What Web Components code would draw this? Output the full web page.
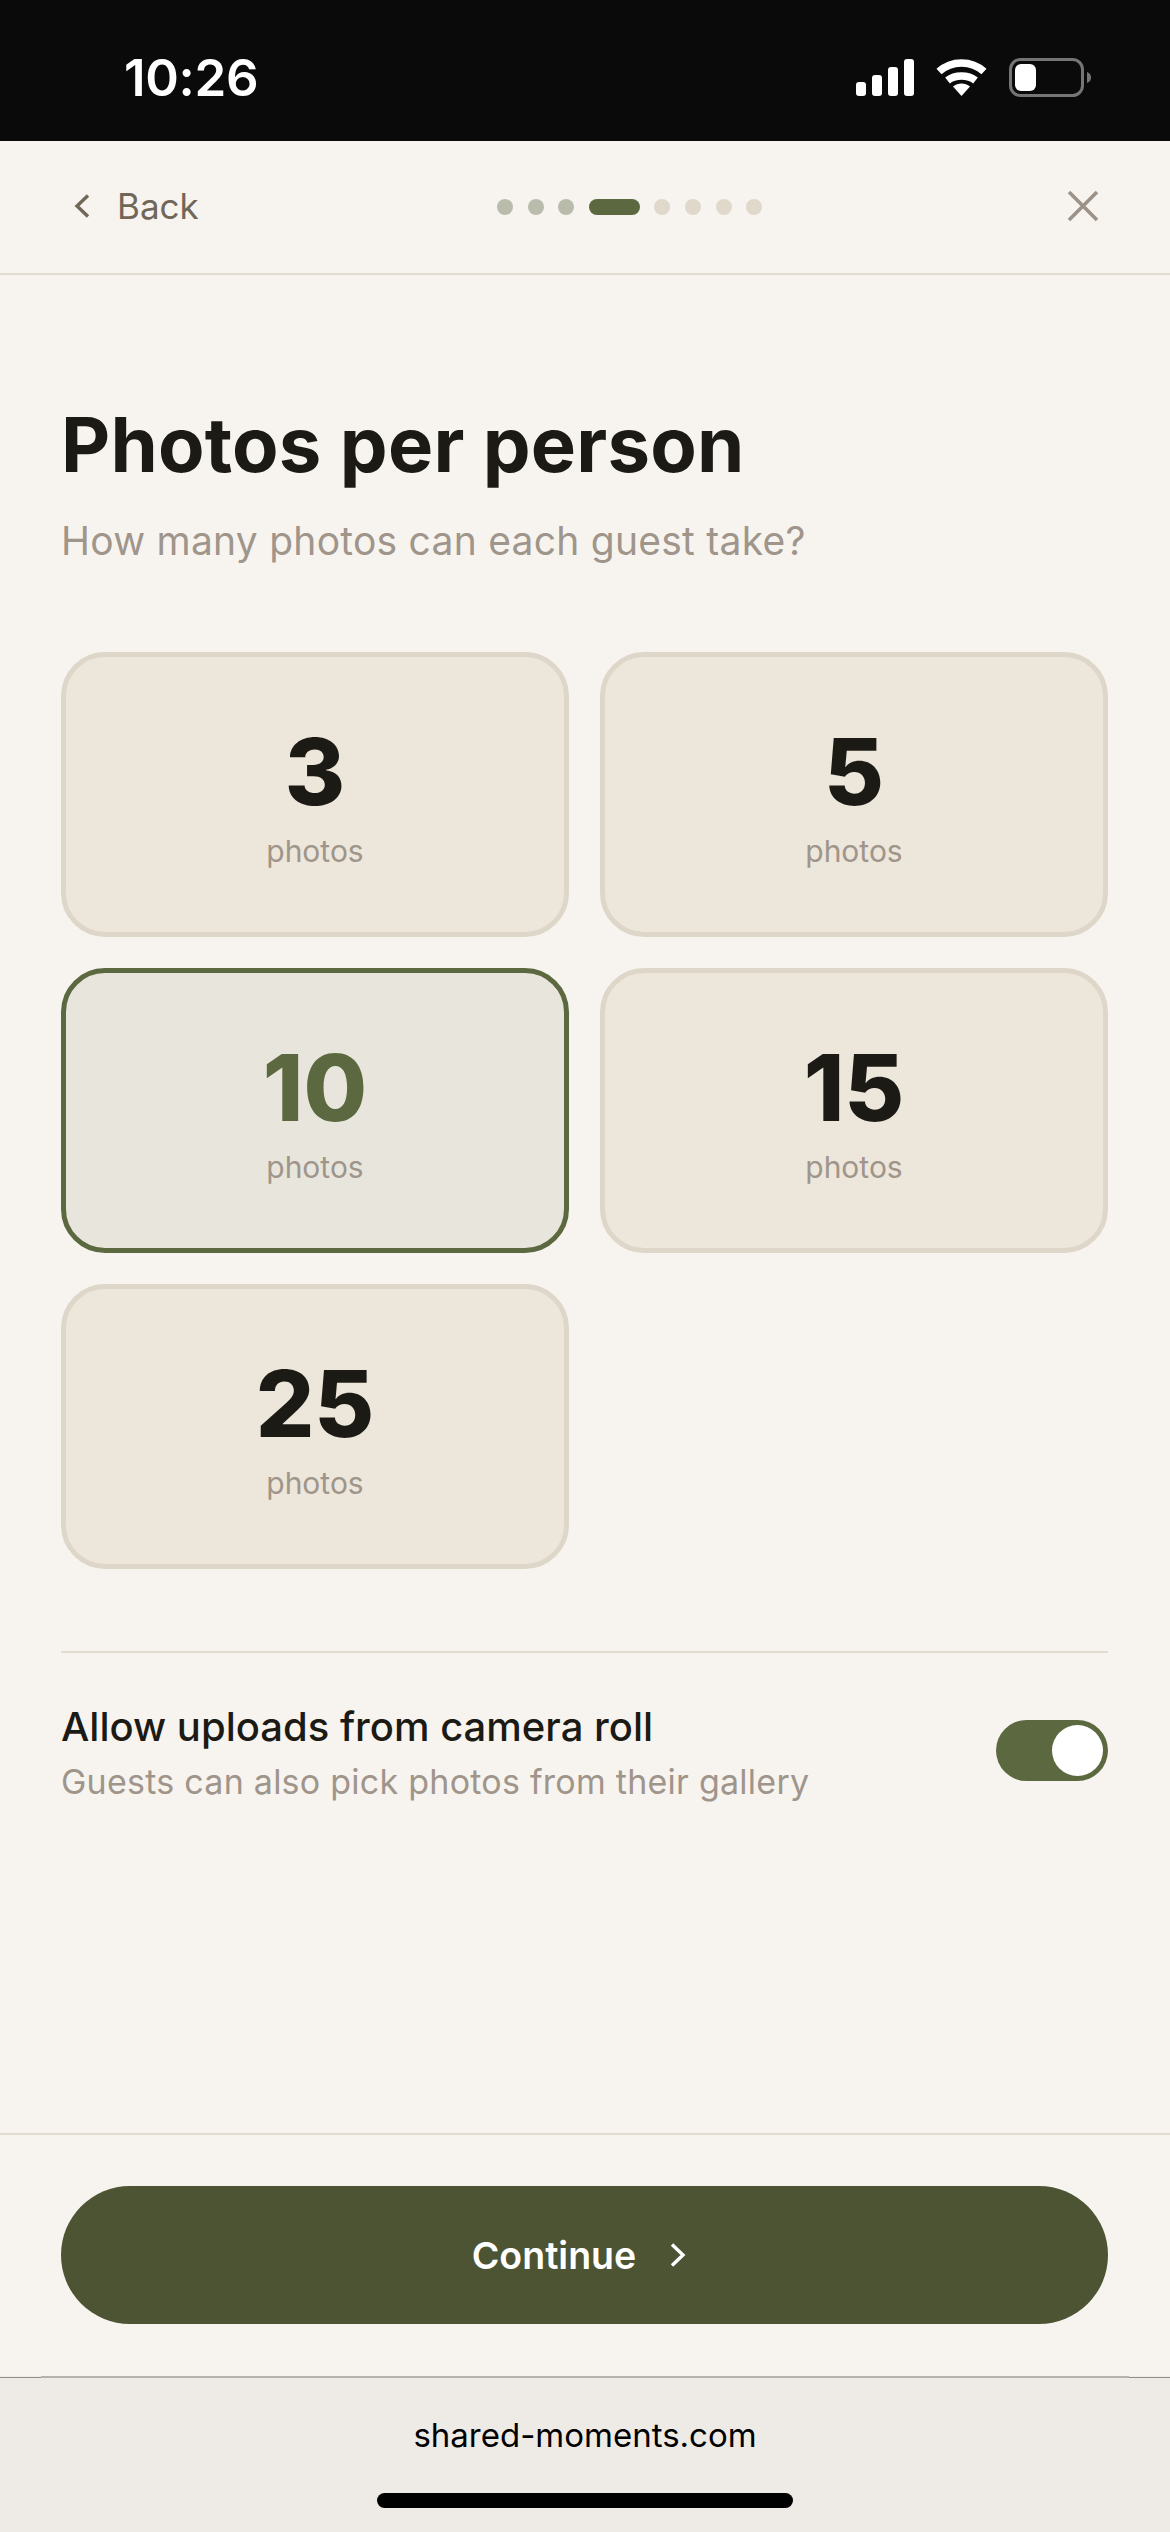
<!DOCTYPE html>
<html lang="en">
<head>
<meta charset="utf-8">
<title>Photos per person</title>
<style>
  html, body { margin: 0; padding: 0; background: #f7f4ef; }
  body { font-family: Inter, "Liberation Sans", sans-serif; }
</style>
</head>
<body>
<setup-screen>
  <status-bar slot="status" time="10:26"></status-bar>
  <top-nav slot="nav" step="4" total="8"></top-nav>
  <h-eading slot="main" title="Photos per person" sub="How many photos can each guest take?"></h-eading>
  <option-grid slot="main">
    <photo-option count="3"></photo-option>
    <photo-option count="5"></photo-option>
    <photo-option count="10" selected></photo-option>
    <photo-option count="15"></photo-option>
    <photo-option count="25"></photo-option>
  </option-grid>
  <toggle-row slot="main" label="Allow uploads from camera roll" hint="Guests can also pick photos from their gallery"></toggle-row>
  <footer-action slot="footer" label="Continue"></footer-action>
  <browser-bar slot="browser" url="shared-moments.com"></browser-bar>
</setup-screen>

<script>
(function () {
  const FONT = 'Inter, "Liberation Sans", sans-serif';

  function define(name, render) {
    customElements.define(name, class extends HTMLElement {
      connectedCallback() {
        if (this.shadowRoot) return;
        this.attachShadow({ mode: 'open' }).innerHTML = render(this);
      }
    });
  }

  define('setup-screen', () => `
    <style>
      :host { display: flex; flex-direction: column; width: 1170px; height: 2532px; background: #f7f4ef; overflow: hidden; font-family: ${FONT}; }
      main { flex: 1; display: flex; flex-direction: column; padding: 0 62px 0 61px; min-height: 0; }
    </style>
    <slot name="status"></slot>
    <slot name="nav"></slot>
    <main>
      <slot name="main"></slot>
    </main>
    <slot name="footer"></slot>
    <slot name="browser"></slot>
  `);

  define('status-bar', el => `
    <style>
      :host { display: flex; align-items: center; justify-content: space-between; height: 141px; box-sizing: border-box; padding: 0 79px 0 124px; background: #0a0a0a; color: #fff; }
      .time { font-size: 51px; font-weight: 600; letter-spacing: -0.3px; line-height: 1; padding-top: 13px; }
      .icons { display: flex; align-items: center; gap: 22px; padding-top: 14px; }
      svg { display: block; }
    </style>
    <span class="time">${el.getAttribute('time')}</span>
    <div class="icons">
      <svg width="58" height="37" viewBox="0 0 58 37" fill="#fff">
        <rect x="0" y="23" width="10" height="14" rx="3"/>
        <rect x="16" y="16" width="10" height="21" rx="3"/>
        <rect x="32" y="8" width="10" height="29" rx="3"/>
        <rect x="48" y="0" width="10" height="37" rx="3"/>
      </svg>
      <svg width="51" height="37" viewBox="0 0 51 37">
        <g fill="none" stroke="#fff" stroke-width="7.5">
          <path d="M3 12.5 C15.5 1 35.5 1 48 12.5"/>
          <path d="M11.5 21.5 C19 15.5 32 15.5 39.5 21.5"/>
        </g>
        <path d="M17 27.5 C22 23.5 29 23.5 34 27.5 L25.5 37 Z" fill="#fff"/>
      </svg>
      <svg width="82" height="39" viewBox="0 0 82 39">
        <rect x="1.5" y="1.5" width="72" height="36" rx="10" fill="none" stroke="#757575" stroke-width="3"/>
        <rect x="6" y="6" width="21" height="27" rx="6" fill="#fff"/>
        <path d="M78 14 C81 15 82 17 82 19.5 C82 22 81 24 78 25 Z" fill="#757575"/>
      </svg>
    </div>
  `);

  define('step-dots', el => {
    const step = +el.getAttribute('step');
    const total = +el.getAttribute('total');
    let dots = '';
    for (let i = 1; i <= total; i++) {
      dots += `<i class="${i < step ? 'done' : i === step ? 'now' : ''}"></i>`;
    }
    return `
      <style>
        :host { display: flex; gap: 14.6px; align-items: center; }
        i { display: block; width: 16px; height: 16px; border-radius: 8px; background: #e0d8ca; }
        i.done { background: #b9bcaa; }
        i.now { width: 51px; background: #5c6940; }
      </style>
      ${dots}
    `;
  });

  define('top-nav', el => `
    <style>
      :host { display: flex; align-items: center; height: 134px; box-sizing: border-box; border-bottom: 2px solid #e2dbcf; padding: 0 71px 2px 74px; position: relative; }
      .back { display: flex; align-items: center; gap: 27px; font-size: 35px; color: #716759; line-height: 1; }
      svg { display: block; }
      step-dots { position: absolute; left: 497px; top: 58px; }
      .close { margin-left: auto; }
    </style>
    <div class="back">
      <svg width="16" height="24" viewBox="0 0 16 24" fill="none" stroke="#716759" stroke-width="3.4"><path d="M14 1.5 L3 12 L14 22.5"/></svg>
      <span>Back</span>
    </div>
    <step-dots step="${el.getAttribute('step')}" total="${el.getAttribute('total')}"></step-dots>
    <svg class="close" width="32" height="32" viewBox="0 0 32 32" fill="none" stroke="#9c9288" stroke-width="3.6"><path d="M2 2 L30 30 M30 2 L2 30"/></svg>
  `);

  define('h-eading', el => `
    <style>
      :host { display: block; padding-top: 124px; }
      h1 { margin: 0; font-size: 76px; font-weight: 750; line-height: 90px; letter-spacing: 0.2px; color: #1c1a14; }
      p { margin: 28px 0 0; font-size: 39px; line-height: 48px; letter-spacing: 0.25px; color: #a0958b; }
    </style>
    <h1>${el.getAttribute('title')}</h1>
    <p>${el.getAttribute('sub')}</p>
  `);

  define('option-grid', () => `
    <style>
      :host { display: grid; grid-template-columns: 508px 508px; grid-auto-rows: 285px; column-gap: 31px; row-gap: 31px; margin-top: 87px; }
    </style>
    <slot></slot>
  `);

  define('photo-option', el => `
    <style>
      :host { display: flex; flex-direction: column; align-items: center; box-sizing: border-box; border: 5px solid #ded6c9; border-radius: 44px; background: #ede6da; padding-top: 65px; }
      :host([selected]) { border-color: #5c6940; background: #e8e6dc; }
      .n { font-size: 92px; font-weight: 800; line-height: 100px; color: #1c1a14; }
      :host([selected]) .n { color: #5c6940; }
      .l { font-size: 30px; line-height: 36px; color: #a0958b; margin-top: 11px; }
    </style>
    <span class="n">${el.getAttribute('count')}</span>
    <span class="l">photos</span>
  `);

  define('toggle-row', el => `
    <style>
      :host { display: flex; align-items: flex-start; justify-content: space-between; margin-top: 82px; border-top: 2px solid #e2dbcf; padding-top: 46px; }
      .label { font-size: 40px; font-weight: 500; line-height: 56px; color: #1c1a14; }
      .hint { font-size: 34px; line-height: 54px; letter-spacing: 0.25px; color: #a0958b; }
      .track { display: flex; justify-content: flex-end; align-items: center; width: 112px; height: 61px; box-sizing: border-box; padding-right: 5px; margin-top: 21px; border-radius: 31px; background: #5c6940; }
      .knob { width: 51px; height: 51px; border-radius: 50%; background: #fff; }
    </style>
    <div>
      <div class="label">${el.getAttribute('label')}</div>
      <div class="hint">${el.getAttribute('hint')}</div>
    </div>
    <div class="track"><div class="knob"></div></div>
  `);

  define('footer-action', el => `
    <style>
      :host { display: block; border-top: 2px solid #e2dbcf; padding: 51px 62px 52px 61px; }
      .btn { display: flex; align-items: center; justify-content: center; gap: 34px; height: 138px; border-radius: 69px; background: #4d5433; color: #fff; font-size: 37.5px; font-weight: 600; }
      svg { display: block; margin-right: 11px; }
    </style>
    <div class="btn">
      <span>${el.getAttribute('label')}</span>
      <svg width="16" height="24" viewBox="0 0 16 24" fill="none" stroke="#fff" stroke-width="3.4"><path d="M2 1.5 L13 12 L2 22.5"/></svg>
    </div>
  `);

  define('browser-bar', el => `
    <style>
      :host { display: flex; flex-direction: column; align-items: center; height: 156px; background: #eeebe7; color: #000; }
      .rule { align-self: stretch; height: 2px; background: linear-gradient(#b4b2ae, #b4b2ae) 41px 0 / 1088px 2px no-repeat, linear-gradient(transparent 1px, #8f8d8a 1px); }
      .url { font-size: 33px; line-height: 40px; margin-top: 37px; }
      .home { width: 416px; height: 15px; border-radius: 8px; background: #000; margin-top: 38px; }
    </style>
    <div class="rule"></div>
    <div class="url">${el.getAttribute('url')}</div>
    <div class="home"></div>
  `);
})();
</script>
</body>
</html>
